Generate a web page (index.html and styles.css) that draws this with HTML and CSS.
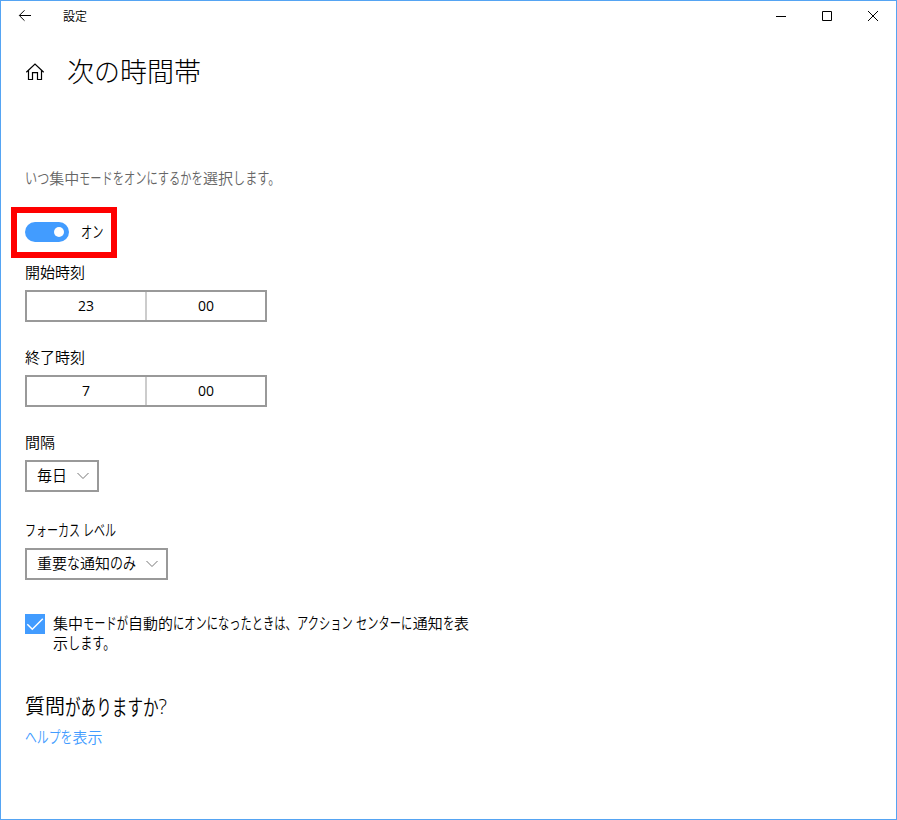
FILE: index.html
```html
<!DOCTYPE html>
<html lang="ja">
<head>
<meta charset="utf-8">
<title>設定</title>
<link rel="stylesheet" href="styles.css">
</head>
<body>
<div class="window">
  <header class="titlebar">
    <svg class="back" width="14" height="12" viewBox="0 0 14 12"><path d="M13 5.5H1.5M6.5 .3L1.3 5.5l5.2 5.2"/></svg>
    <span class="app-name">設定</span>
    <div class="controls">
      <svg width="46" height="30" viewBox="0 0 46 30"><path d="M18 15.5h10"/></svg>
      <svg width="46" height="30" viewBox="0 0 46 30"><path d="M18.5 10.5h9v9h-9z"/></svg>
      <svg width="46" height="30" viewBox="0 0 46 30"><path d="M18 10l10 10M28 10L18 20"/></svg>
    </div>
  </header>
  <div class="heading">
    <svg class="home" width="20" height="20" viewBox="0 0 20 20"><path d="M1.3 11.2L10 3.1l8.7 8.1M3.5 9.5v9h4v-6.8h5v6.8h4v-9"/></svg>
    <h1>次<span class="k n1 full">の</span>時間帯</h1>
  </div>
  <main>
    <p class="lead"><span class="k n2 loose">いつ</span>集中<span class="k n11">モードをオンにするかを</span>選択<span class="k n4 loose">します。</span></p>
    <div class="toggle-row">
      <span class="toggle"><span class="knob"></span></span>
      <span class="k n2">オン</span>
    </div>
    <div class="label">開始時刻</div>
    <div class="time"><span>23</span><span>00</span></div>
    <div class="label">終了時刻</div>
    <div class="time"><span>7</span><span>00</span></div>
    <div class="label">間隔</div>
    <div class="select repeat"><span>毎日</span><svg width="12" height="8" viewBox="0 0 12 8"><path d="M.5 1L6 6.5 11.5 1"/></svg></div>
    <div class="label focus"><span class="k n5 tight">フォーカス</span> <span class="k n3 tight">レベル</span></div>
    <div class="select level"><span>重要<span class="k n1 wide">な</span>通知<span class="k n2 wide">のみ</span></span><svg width="12" height="8" viewBox="0 0 12 8"><path d="M.5 1L6 6.5 11.5 1"/></svg></div>
    <div class="check-row">
      <svg class="box" width="20" height="20" viewBox="0 0 20 20"><path d="M2.3 10.2l5 5L17.8 4.7"/></svg>
      <p>集中<span class="k n4">モードが</span>自動的<span class="k n11">にオンになったときは、</span><span class="k n5">アクション</span> <span class="k n5">センターに</span>通知<span class="k n1">を</span>表<br>示<span class="k n4 loose">します。</span></p>
    </div>
    <h2>質問<span class="k n6">がありますか</span><span class="q">?</span></h2>
    <a class="help"><span class="k n4 link">ヘルプを</span>表示</a>
  </main>
</div>
</body>
</html>
```
FILE: styles.css
```css
* { box-sizing: border-box; }
body {
  margin: 0;
  background: #fff;
  color: #000;
  font: 350 15px/20px "Noto Sans CJK JP", sans-serif;
}
h1, h2, p { margin: 0; font-weight: 350; }
svg { fill: none; stroke: #000; flex: none; }
.window { height: 820px; border: 1px solid #55a4f3; white-space: nowrap; }

/* Condensed kana: every glyph is one em wide before scaling */
.k {
  --s: .75;
  display: inline-block;
  transform: scale(var(--s), 1.08);
  transform-origin: 0 50%;
  width: calc(var(--n) * var(--s) * 1em);
}
.tight { --s: .735; }
.link { --s: .79; }
.loose { --s: .81; }
.wide { --s: .865; }
.full { --s: .96; }
.n1 { --n: 1; }
.n2 { --n: 2; }
.n3 { --n: 3; }
.n4 { --n: 4; }
.n5 { --n: 5; }
.n6 { --n: 6; --s: .78; }
.n11 { --n: 11; }

.titlebar { display: flex; height: 30px; align-items: center; padding-left: 17px; font-size: 12px; }
.app-name { margin-left: 31px; }
.controls { display: flex; margin-left: auto; }
.heading { display: flex; align-items: center; height: 40px; margin: 20px 0 0 24px; }
.home { margin-right: 22px; stroke-width: 1.2; }
h1 { font-size: 27px; line-height: 40px; font-weight: 300; }
h1 .k { transform: scaleX(var(--s)); }
main { padding: 77px 24px 0; }
.lead { color: #666; }
.toggle-row {
  display: flex;
  align-items: center;
  width: 106px;
  height: 51px;
  margin: 19px 0 4px -14px;
  padding: 0 0 2px 8px;
  border: 6px solid #f00;
}
.toggle {
  display: flex;
  align-items: center;
  justify-content: flex-end;
  width: 44px;
  height: 20px;
  margin-right: 12px;
  padding-right: 5px;
  border-radius: 10px;
  background: #429cff;
}
.knob { width: 10px; height: 10px; border-radius: 50%; background: #fff; }
.label { height: 20px; margin-bottom: 8px; }
.time {
  display: flex;
  width: 242px;
  height: 32px;
  margin-bottom: 25px;
  border: 2px solid #999;
  font: 14px/27px "Open Sans", sans-serif;
  text-align: center;
}
.time span { flex: 1; }
.time span + span { flex: 0 0 120px; border-left: 2px solid #ccc; }
.select {
  display: flex;
  align-items: center;
  justify-content: space-between;
  height: 32px;
  padding: 0 8px 0 10px;
  border: 2px solid #999;
}
.select > span { padding-bottom: 2px; }
.select svg { stroke: #777; }
.repeat { width: 74px; }
.level { width: 143px; }
.focus { margin-top: 28px; }
.check-row { display: flex; gap: 8px; margin-top: 33px; }
.box { margin-top: 1px; background: #429cff; stroke: #fff; stroke-width: 1.5; }
h2 { margin-top: 39px; font-size: 20px; line-height: 28px; }
.q { font-family: "Open Sans", sans-serif; }
.help { display: block; margin-top: 6px; color: #429cff; }
```
